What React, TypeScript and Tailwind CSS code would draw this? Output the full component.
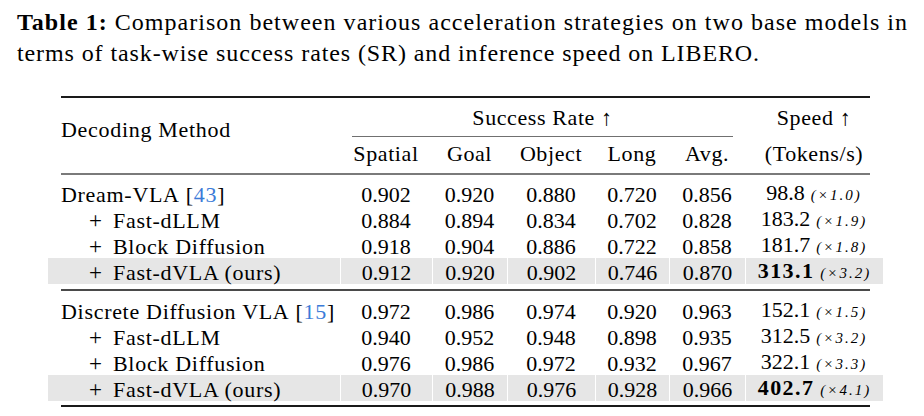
import React from "react";

const cols = "grid grid-cols-[292px_92px_75px_88px_74px_76px_138px]";
const serif = { fontFamily: '"Liberation Serif", "Times New Roman", serif' };

type Row = {
  name: string;
  cite?: string;
  sub?: boolean;
  vals: string[];
  speed: string;
  mult: string;
  hl?: boolean;
};

const group1: Row[] = [
  { name: "Dream-VLA", cite: "43", vals: ["0.902", "0.920", "0.880", "0.720", "0.856"], speed: "98.8", mult: "1.0" },
  { name: "Fast-dLLM", sub: true, vals: ["0.884", "0.894", "0.834", "0.702", "0.828"], speed: "183.2", mult: "1.9" },
  { name: "Block Diffusion", sub: true, vals: ["0.918", "0.904", "0.886", "0.722", "0.858"], speed: "181.7", mult: "1.8" },
  { name: "Fast-dVLA (ours)", sub: true, hl: true, vals: ["0.912", "0.920", "0.902", "0.746", "0.870"], speed: "313.1", mult: "3.2" },
];

const group2: Row[] = [
  { name: "Discrete Diffusion VLA", cite: "15", vals: ["0.972", "0.986", "0.974", "0.920", "0.963"], speed: "152.1", mult: "1.5" },
  { name: "Fast-dLLM", sub: true, vals: ["0.940", "0.952", "0.948", "0.898", "0.935"], speed: "312.5", mult: "3.2" },
  { name: "Block Diffusion", sub: true, vals: ["0.976", "0.986", "0.972", "0.932", "0.967"], speed: "322.1", mult: "3.3" },
  { name: "Fast-dVLA (ours)", sub: true, hl: true, vals: ["0.970", "0.988", "0.976", "0.928", "0.966"], speed: "402.7", mult: "4.1" },
];

function DataRow({ r }: { r: Row }) {
  const bg = r.hl ? "bg-[#e6e6e6]" : "";
  const sep = r.hl ? "border-l border-white" : "";
  return (
    <div className={`${cols} h-[26px] items-stretch ${bg}`}>
      <div className="flex items-center whitespace-nowrap pl-[13px] tracking-[0.7px]">
        {r.sub ? (
          <>
            <span className="inline-block w-[28px]" />
            <span className="inline-block w-[24px] text-[23px] tracking-normal">+</span>
          </>
        ) : null}
        <span>{r.name}</span>
        {r.cite ? (
          <span className="ml-[6px]">
            [<span className="text-[#3b7bd8]">{r.cite}</span>]
          </span>
        ) : null}
      </div>
      {r.vals.map((v, i) => (
        <div key={i} className={`flex items-center justify-center ${sep}`}>
          {v}
        </div>
      ))}
      <div className={`flex items-center justify-center ${sep}`}>
        <div className="flex items-baseline gap-[6px]">
          <span className={r.hl ? "font-bold tracking-[1.4px]" : ""}>{r.speed}</span>
          <span className="italic text-[15px] tracking-[2px]">(×{r.mult})</span>
        </div>
      </div>
    </div>
  );
}

export default function App() {
  return (
    <div className="w-[924px] h-[416px] bg-white text-black overflow-hidden" style={serif}>
      <div className="pl-[17px] pt-[7px] text-[24px] leading-[31px] whitespace-nowrap">
        <div className="tracking-[1.03px]">
          <span className="font-bold">Table 1:</span> Comparison between various acceleration strategies on two base models in
        </div>
        <div className="tracking-[0.9px]">terms of task-wise success rates (SR) and inference speed on LIBERO.</div>
      </div>

      <div className="ml-[48px] mt-[27px] w-[835px] text-[22px] leading-[25px]">
        <div className="mx-[13px] h-[2px] bg-[#1a1a1a]" />
        <div className={`${cols} grid-rows-[38px_1px_32px]`}>
          <div className="row-span-3 pl-[13px] pt-[19px] tracking-[0.7px] whitespace-nowrap">Decoding Method</div>
          <div className="col-span-5 flex items-center justify-center tracking-[0.6px]">Success Rate ↑</div>
          <div className="flex items-center justify-center tracking-[0.6px]">Speed ↑</div>
          <div className="col-span-5 mx-[12px] bg-[#707070]" />
          <div />
          <div className="flex items-center justify-center tracking-[0.6px]">Spatial</div>
          <div className="flex items-center justify-center tracking-[0.6px]">Goal</div>
          <div className="flex items-center justify-center tracking-[0.6px]">Object</div>
          <div className="flex items-center justify-center tracking-[0.6px]">Long</div>
          <div className="flex items-center justify-center tracking-[0.6px]">Avg.</div>
          <div className="flex items-center justify-center tracking-[0.6px]">(Tokens/s)</div>
        </div>
        <div className="mx-[13px] mt-[4px] h-[2px] bg-[#7a7a7a]" />
        <div className="pt-[5px]">
          {group1.map((r, i) => (
            <DataRow key={i} r={r} />
          ))}
        </div>
        <div className="mx-[13px] mt-[5px] h-[2px] bg-[#4a4a4a]" />
        <div className="pt-[6px]">
          {group2.map((r, i) => (
            <DataRow key={i} r={r} />
          ))}
        </div>
        <div className="mx-[13px] mt-[4px] h-[2px] bg-[#1a1a1a]" />
      </div>
    </div>
  );
}
